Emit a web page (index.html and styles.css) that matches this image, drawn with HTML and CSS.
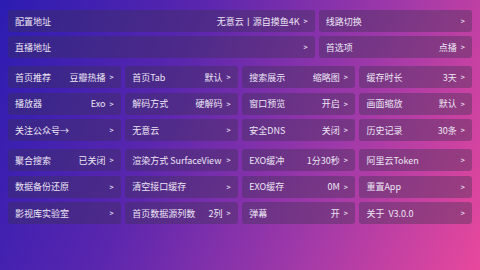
FILE: index.html
```html
<!DOCTYPE html>
<html lang="zh-CN">
<head>
  <meta charset="UTF-8">
  <meta name="viewport" content="width=device-width, initial-scale=1.0">
  <title>设置</title>
  <link rel="stylesheet" href="styles.css">
</head>
<body>
  <div class="settings">
    <!-- 地址 -->
    <div class="group group-wide">
      <div class="item"><span class="label">配置地址</span><span class="value">无意云丨源自摸鱼4K</span><span class="arrow">&gt;</span></div>
      <div class="item"><span class="label">线路切换</span><span class="value"></span><span class="arrow">&gt;</span></div>
      <div class="item"><span class="label">直播地址</span><span class="value"></span><span class="arrow">&gt;</span></div>
      <div class="item"><span class="label">首选项</span><span class="value">点播</span><span class="arrow">&gt;</span></div>
    </div>

    <!-- 常规 -->
    <div class="group">
      <div class="item"><span class="label">首页推荐</span><span class="value">豆瓣热播</span><span class="arrow">&gt;</span></div>
      <div class="item"><span class="label">首页Tab</span><span class="value">默认</span><span class="arrow">&gt;</span></div>
      <div class="item"><span class="label">搜索展示</span><span class="value">缩略图</span><span class="arrow">&gt;</span></div>
      <div class="item"><span class="label">缓存时长</span><span class="value">3天</span><span class="arrow">&gt;</span></div>

      <div class="item"><span class="label">播放器</span><span class="value">Exo</span><span class="arrow">&gt;</span></div>
      <div class="item"><span class="label">解码方式</span><span class="value">硬解码</span><span class="arrow">&gt;</span></div>
      <div class="item"><span class="label">窗口预览</span><span class="value">开启</span><span class="arrow">&gt;</span></div>
      <div class="item"><span class="label">画面缩放</span><span class="value">默认</span><span class="arrow">&gt;</span></div>

      <div class="item"><span class="label">关注公众号→</span><span class="value"></span><span class="arrow">&gt;</span></div>
      <div class="item"><span class="label">无意云</span><span class="value"></span><span class="arrow">&gt;</span></div>
      <div class="item"><span class="label">安全DNS</span><span class="value">关闭</span><span class="arrow">&gt;</span></div>
      <div class="item"><span class="label">历史记录</span><span class="value">30条</span><span class="arrow">&gt;</span></div>
    </div>

    <!-- 高级 -->
    <div class="group">
      <div class="item"><span class="label">聚合搜索</span><span class="value">已关闭</span><span class="arrow">&gt;</span></div>
      <div class="item"><span class="label">渲染方式 SurfaceView</span><span class="value"></span><span class="arrow">&gt;</span></div>
      <div class="item"><span class="label">EXO缓冲</span><span class="value">1分30秒</span><span class="arrow">&gt;</span></div>
      <div class="item"><span class="label">阿里云Token</span><span class="value"></span><span class="arrow">&gt;</span></div>

      <div class="item"><span class="label">数据备份还原</span><span class="value"></span><span class="arrow">&gt;</span></div>
      <div class="item"><span class="label">清空接口缓存</span><span class="value"></span><span class="arrow">&gt;</span></div>
      <div class="item"><span class="label">EXO缓存</span><span class="value">0M</span><span class="arrow">&gt;</span></div>
      <div class="item"><span class="label">重置App</span><span class="value"></span><span class="arrow">&gt;</span></div>

      <div class="item"><span class="label">影视库实验室</span><span class="value"></span><span class="arrow">&gt;</span></div>
      <div class="item"><span class="label">首页数据源列数</span><span class="value">2列</span><span class="arrow">&gt;</span></div>
      <div class="item"><span class="label">弹幕</span><span class="value">开</span><span class="arrow">&gt;</span></div>
      <div class="item"><span class="label">关于&nbsp; V3.0.0</span><span class="value"></span><span class="arrow">&gt;</span></div>
    </div>
  </div>
</body>
</html>
```

FILE: styles.css
```css
html, body {
  height: 100%;
}

body {
  margin: 0;
  font-family: "Noto Sans CJK SC", "Noto Sans", sans-serif;
  font-size: 9px;
  color: #ece6f4;
  background: linear-gradient(112deg, #2c1cb2 0%, #5a26ae 35%, #a43aa8 70%, #e8489c 100%);
  overflow: hidden;
}

.settings {
  padding: 10px 8px;
}

.group {
  display: grid;
  grid-template-columns: repeat(4, 1fr);
  gap: 4.5px 4.5px;
  margin-bottom: 8px;
}

.group-wide {
  grid-template-columns: 2fr 1fr;
  gap: 4px 4px;
}

.item {
  display: flex;
  align-items: center;
  height: 22px;
  padding: 0 7px;
  background-color: rgba(58, 50, 78, 0.38);
  border-radius: 3px;
  white-space: nowrap;
}

.label {
  flex: 1 1 auto;
}

.value {
  margin-right: 4px;
}

.arrow {
  font-size: 7px;
  font-weight: bold;
}
```
